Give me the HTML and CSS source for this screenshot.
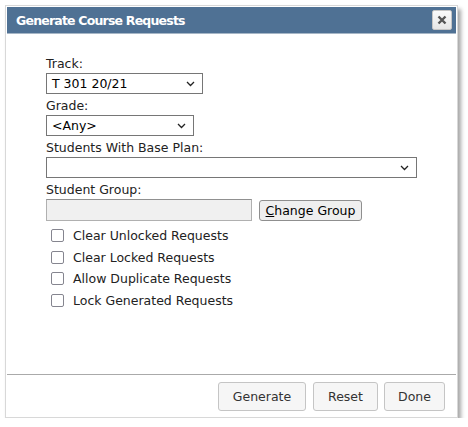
FILE: index.html
```html
<!DOCTYPE html>
<html>
<head>
<meta charset="utf-8">
<link rel="stylesheet" href="styles.css">
</head>
<body>
<div class="dialog">
  <div class="titlebar">
    <span class="title">Generate Course Requests</span>
    <button class="close" aria-label="Close">
      <svg width="10" height="10" viewBox="0 0 10 10"><path d="M1.5 1.5 L8.5 8.5 M8.5 1.5 L1.5 8.5" stroke="#555" stroke-width="2.4" stroke-linecap="butt"/></svg>
    </button>
  </div>
  <div class="content">
    <label class="lbl">Track:</label>
    <div class="select sel-track"><span>T 301 20/21</span><svg class="chev" width="9" height="6" viewBox="0 0 9 6"><path d="M1 1 L4.5 4.5 L8 1" fill="none" stroke="#222" stroke-width="1.3"/></svg></div>
    <label class="lbl">Grade:</label>
    <div class="select sel-grade"><span>&lt;Any&gt;</span><svg class="chev" width="9" height="6" viewBox="0 0 9 6"><path d="M1 1 L4.5 4.5 L8 1" fill="none" stroke="#222" stroke-width="1.3"/></svg></div>
    <label class="lbl">Students With Base Plan:</label>
    <div class="select sel-plan"><span></span><svg class="chev" width="9" height="6" viewBox="0 0 9 6"><path d="M1 1 L4.5 4.5 L8 1" fill="none" stroke="#222" stroke-width="1.3"/></svg></div>
    <label class="lbl">Student Group:</label>
    <div class="group-row">
      <div class="group-input"></div>
      <button class="change-btn"><u>C</u>hange Group</button>
    </div>
    <div class="checks">
      <div class="check"><span class="box"></span>Clear Unlocked Requests</div>
      <div class="check"><span class="box"></span>Clear Locked Requests</div>
      <div class="check"><span class="box"></span>Allow Duplicate Requests</div>
      <div class="check"><span class="box"></span>Lock Generated Requests</div>
    </div>
  </div>
  <div class="footer">
    <button class="btn btn-generate">Generate</button>
    <button class="btn btn-reset">Reset</button>
    <button class="btn btn-done">Done</button>
  </div>
</div>
</body>
</html>
```
FILE: styles.css
```css
html, body { margin: 0; padding: 0; background: #fff; }
body { font-family: "DejaVu Sans", Verdana, sans-serif; font-size: 12.5px; color: #222; }
.dialog {
  margin: 5px 0 0 5px;
  width: 453px;
  height: 413px;
  box-sizing: border-box;
  border: 1px solid #d8d8d8;
  padding: 1px;
  background: #fff;
  box-shadow: 3px 4px 4px rgba(0,0,0,0.35);
  display: flex;
  flex-direction: column;
}
.titlebar {
  height: 26px;
  flex: none;
  background: #4f7194;
  border-bottom: 1px solid #a6b6c6;
  display: flex;
  align-items: center;
  justify-content: space-between;
  padding: 0 4px 0 9px;
}
.title { color: #fff; font-weight: bold; font-size: 12.5px; letter-spacing: -0.8px; }
.close {
  width: 20px; height: 20px; padding: 0; margin: 0;
  border: 1px solid #c5c5c5; border-radius: 2px;
  background: linear-gradient(#fafafa, #e6e6e6);
  display: flex; align-items: center; justify-content: center;
}
.content {
  flex: 1;
  padding: 22px 0 0 39px;
  display: flex;
  flex-direction: column;
  align-items: flex-start;
}
.lbl { display: block; line-height: 15px; margin-bottom: 2px; }
.select {
  box-sizing: border-box;
  height: 21px;
  border: 1px solid #767676;
  display: flex;
  align-items: center;
  justify-content: space-between;
  padding: 0 7px 0 5px;
  margin-bottom: 4px;
  color: #000;
}
.sel-track { width: 157px; }
.sel-grade { width: 148px; }
.sel-plan { width: 371px; }
.chev { display: block; }
.group-row { display: flex; align-items: center; gap: 7px; margin-bottom: 4px; }
.group-input {
  width: 206px; height: 22px; box-sizing: border-box;
  border: 1px solid #b0b0b0; border-top-color: #909090;
  background: #f0f0f0;
}
.change-btn {
  font-family: inherit; font-size: 12.5px; color: #000;
  width: 103px; height: 21px; padding: 0;
  border: 1px solid #8f8f8f; border-radius: 3px;
  background: #efefef;
}
.checks { display: flex; flex-direction: column; }
.check { display: flex; align-items: center; height: 21.5px; }
.box {
  width: 11px; height: 11px;
  border: 1px solid #85858f; border-radius: 2px;
  margin: 0 9px 0 5px;
  background: #fff;
}
.footer {
  height: 42px;
  flex: none;
  box-sizing: border-box;
  border-top: 1px solid #aaa;
  display: flex;
  justify-content: flex-end;
  align-items: flex-start;
  gap: 6px;
  padding: 7px 11px 0 0;
}
.btn {
  font-family: inherit; font-size: 12.5px; color: #333;
  height: 29px; padding: 0;
  border: 1px solid #c5c5c5; border-radius: 3px;
  background: #f6f6f6;
}
.btn-generate { width: 88px; }
.btn-reset { width: 65px; margin-left: 1px; }
.btn-done { width: 61px; }
```
